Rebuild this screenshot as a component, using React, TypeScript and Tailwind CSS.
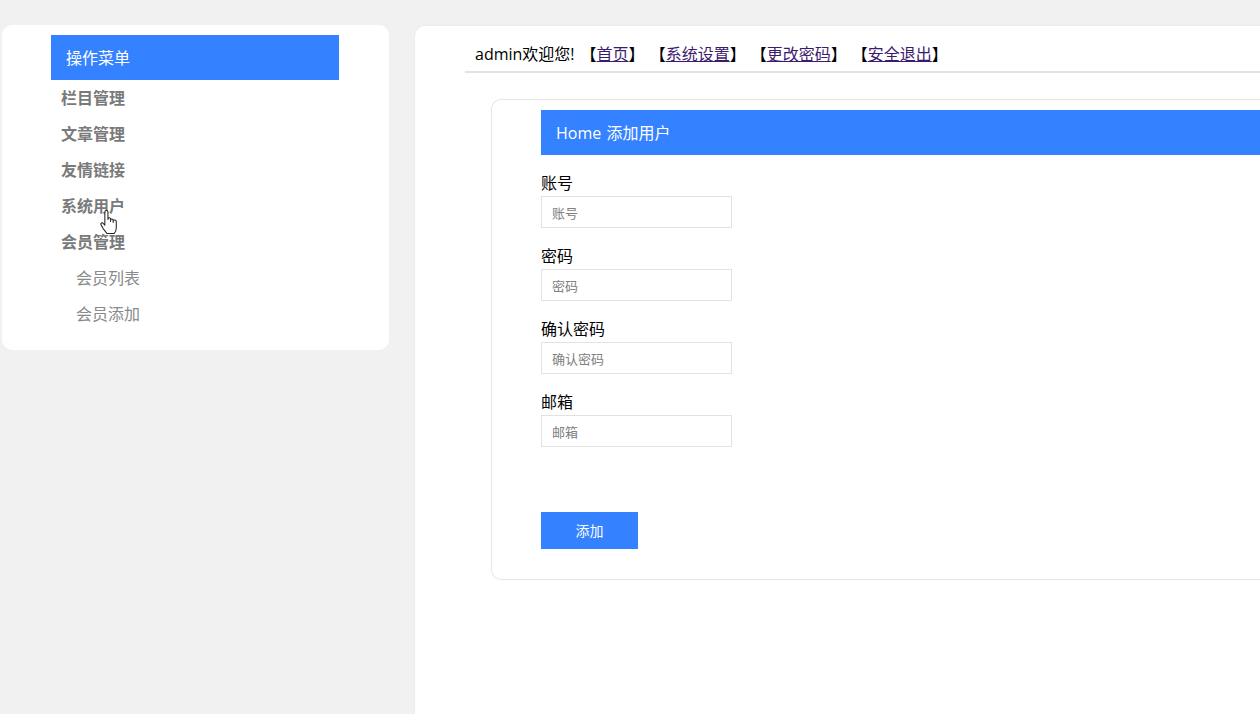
const menuGroups = ["栏目管理", "文章管理", "友情链接", "系统用户", "会员管理"];
const subItems = ["会员列表", "会员添加"];
const topLinks = ["首页", "系统设置", "更改密码", "安全退出"];
const fields = ["账号", "密码", "确认密码", "邮箱"];

export default function App() {
  return (
    <div className="relative flex h-[714px] w-[1260px] overflow-hidden bg-[#f0f1f0] font-['Open_Sans','Noto_Sans_CJK_SC',sans-serif] text-base text-black">
      {/* Sidebar */}
      <div className="ml-[2px] mt-[25px] h-[325px] w-[387px] shrink-0 rounded-[10px] bg-white pl-[49px] pt-[10px]">
        <div className="flex h-[45px] w-[288px] items-center bg-[#3482ff] pl-[15px] text-white">操作菜单</div>
        {menuGroups.map((item) => (
          <div key={item} className="flex h-9 items-center pl-[10px] font-bold text-[#7a7a7a]">
            {item}
          </div>
        ))}
        {subItems.map((item) => (
          <div key={item} className="flex h-9 items-center pl-[25px] text-[#8a8a8a]">
            {item}
          </div>
        ))}
      </div>

      {/* Main */}
      <div className="ml-[26px] mt-[26px] min-w-0 flex-1 rounded-tl-[10px] bg-white pl-[50px] shadow-[0_0_2px_#e4e4e4]">
        <div className="flex h-[47px] items-center border-b-2 border-[#e3e3e3] pl-[10px] pt-[11px]">
          <span className="pr-px">admin欢迎您!</span>
          {topLinks.map((link) => (
            <span key={link} className="ml-[5px]">
              【<a href="#" className="text-[#3c1a6e] underline">{link}</a>】
            </span>
          ))}
        </div>

        <div className="ml-[26px] mt-[26px] rounded-l-[10px] border-y border-l border-[#e6e6e6] pb-[30px] pl-[49px] pt-[10px]">
          <div className="flex h-[45px] items-center bg-[#3482ff] pl-[15px] text-white [word-spacing:1px]">Home 添加用户</div>
          <form className="pt-[17px]">
            {fields.map((field) => (
              <div key={field} className="mb-[17px]">
                <label className="block h-6 leading-[22px]">{field}</label>
                <input
                  placeholder={field}
                  className="block h-8 w-[191px] border border-[#e2e2e2] px-[10px] pt-[2px] text-[13px] outline-none placeholder:text-[#808080]"
                />
              </div>
            ))}
            <button type="button" className="mt-[65px] block h-[37px] w-[97px] bg-[#3482ff] text-sm text-white">
              添加
            </button>
          </form>
        </div>
      </div>

      {/* Mouse cursor */}
      <svg className="absolute left-[100px] top-[209px]" width="18" height="26" viewBox="0 0 17 25" fill="#fff" stroke="#222" strokeWidth="1" strokeLinejoin="round">
        <path d="M4.5 3C4.5 1 7.5 1 7.5 3V10V9.5C7.5 8 10 8 10 9.5V12V10.5C10 9.2 12.5 9.2 12.5 10.5V13V11.5C12.5 10.3 15.5 10.3 15.5 12V18C15.5 20.5 14.5 22.5 13.5 23.5H6.5C5.5 22 4.5 20.5 3 19L1 15.5C0 13.5 2 12.5 3.2 14L4.5 15.5Z" />
      </svg>
    </div>
  );
}
